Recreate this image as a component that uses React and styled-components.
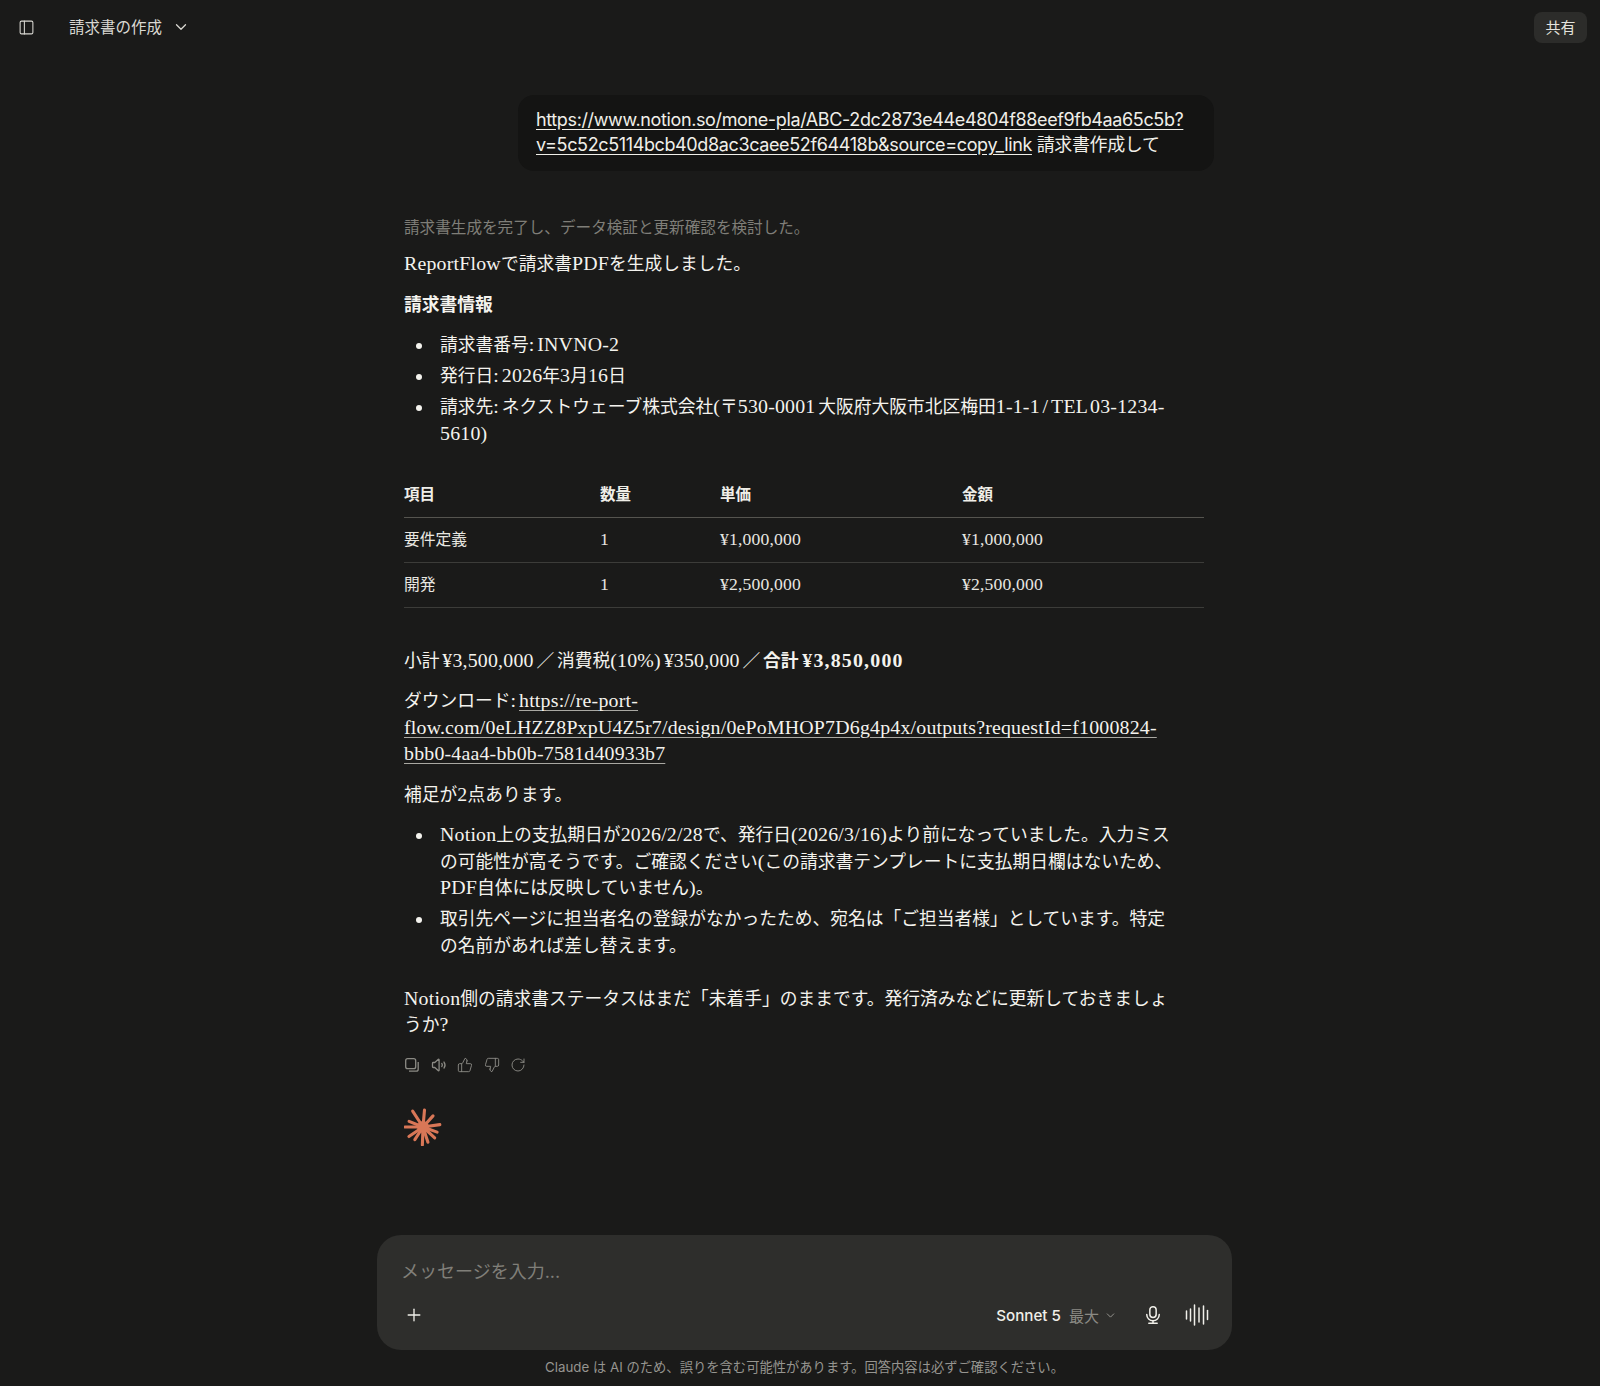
import styled, { createGlobalStyle } from "styled-components";
import { PanelLeft, ChevronDown, ThumbsUp, ThumbsDown, RotateCw, Plus } from "lucide-react";

const CJK = `"Noto Sans CJK JP"`;
const SANS = `Inter, ${CJK}, sans-serif`;
const SERIF = `"Liberation Serif", ${CJK}, serif`;

const GlobalStyle = createGlobalStyle`
  html, body {
    margin: 0;
    padding: 0;
    background: #1a1a19;
  }
  * {
    box-sizing: border-box;
  }
`;

const Page = styled.div`
  height: 1386px;
  display: flex;
  flex-direction: column;
  background: #1a1a19;
  color: #f4f3ee;
  overflow: hidden;
`;

const Header = styled.header`
  height: 54px;
  flex: none;
  display: flex;
  align-items: center;
  padding: 0 13px 0 18px;
  color: #d9d8d2;
`;

const Title = styled.span`
  margin-left: 34px;
  font: 400 15.5px ${SANS};
  position: relative;
  top: -1px;
`;

const TitleChevron = styled(ChevronDown)`
  margin-left: 10px;
`;

const ShareButton = styled.button`
  margin-left: auto;
  width: 53px;
  height: 31px;
  padding: 0 0 2px;
  border: 0;
  border-radius: 8px;
  background: #2c2c2a;
  color: #e4e3dd;
  font: 400 15px ${SANS};
`;

const Thread = styled.main`
  flex: 1;
  width: 828px;
  margin-left: 404px;
`;

const UserRow = styled.div`
  display: flex;
  margin-top: 41px;
`;

const UserBubble = styled.div`
  width: 696px;
  margin-left: 114px;
  padding: 11.5px 18px 13.5px;
  border-radius: 16px;
  background: #141413;
  font: 400 18px/25.5px ${SANS};
  letter-spacing: -0.37px;
  white-space: nowrap;
  color: #f0efe9;
  a {
    color: inherit;
    text-decoration: underline;
    text-underline-offset: 3px;
  }
`;

const Response = styled.article`
  width: 800px;
  margin-top: 45px;
  font: 400 17.75px/26.5px ${SERIF};
  color: #f4f3ee;
`;

const Thinking = styled.p`
  margin: 0 0 11px;
  font: 400 15.6px/24px ${SANS};
  color: #7f7e78;
`;

const Para = styled.p`
  margin: 0 0 14px;
  a {
    color: inherit;
    text-decoration: underline;
    text-decoration-color: #a9a8a2;
    text-decoration-thickness: 1px;
    text-underline-offset: 3px;
  }
`;

// Latin runs of the answer: the reference face is wider and taller than Liberation Serif
const Latin = styled.span`
  font-size: 1.12em;
  line-height: 0;
  letter-spacing: 0.01em;
  word-spacing: -0.12em;
  white-space: pre;
  strong & {
    letter-spacing: 0.06em;
  }
`;

const BulletList = styled.ul`
  margin: 0 0 26.5px;
  padding: 0;
  list-style: none;
`;

const Bullet = styled.li`
  display: grid;
  grid-template-columns: 36px 1fr;
  margin-bottom: 4.5px;
  &::before {
    content: "";
    width: 6px;
    height: 6px;
    margin: 11px 0 0 12px;
    border-radius: 50%;
    background: #f4f3ee;
  }
`;

const InvoiceTable = styled.table`
  width: 800px;
  table-layout: fixed;
  border-collapse: collapse;
  margin: 0 0 40px;
`;

const HeadCell = styled.th`
  width: ${(p) => p.$width}px;
  height: 43.5px;
  padding: 0;
  text-align: left;
  font: 700 15.5px/24px ${SERIF};
  border-bottom: 1.5px solid #55544f;
  color: #efeee8;
`;

const Cell = styled.td`
  height: 45px;
  padding: 1px 0 0;
  font: 400 15.75px/24px ${SERIF};
  border-bottom: 1px solid #3c3c39;
  color: #e8e7e1;
`;

const Actions = styled.div`
  display: flex;
  gap: 10.5px;
  margin: 18px 0 0;
  color: #8b8a84;
`;

const SparkWrap = styled.div`
  margin-top: 35px;
  height: 38px;
`;

const ComposerArea = styled.div`
  flex: none;
  width: 855px;
  margin-left: 377px;
`;

const Composer = styled.div`
  height: 115px;
  padding: 25px 23px 0 24px;
  border-radius: 24px;
  background: #2e2e2c;
  display: flex;
  flex-direction: column;
`;

const Placeholder = styled.div`
  font: 400 18px/24px ${SANS};
  color: #807f79;
`;

const ComposerBar = styled.div`
  display: flex;
  align-items: center;
  margin-top: 19px;
  color: #f0efe9;
`;

const PlusButton = styled(Plus)`
  margin-left: 3px;
`;

const ModelName = styled.span`
  margin-left: auto;
  font: 500 15.2px ${SANS};
  color: #f0efe9;
`;

const ModelLevel = styled.span`
  margin-left: 8px;
  font: 400 15px ${SANS};
  color: #8b8a84;
`;

const ModelChevron = styled(ChevronDown)`
  margin-left: 5px;
  color: #a3a29c;
`;

const MicIcon = styled.svg`
  margin-left: 26px;
`;

const WaveIcon = styled.svg`
  margin-left: 22px;
`;

const Disclaimer = styled.p`
  margin: 0;
  height: 36px;
  padding-top: 9px;
  text-align: center;
  font: 400 13.3px/17px ${SANS};
  color: #969590;
`;

function Mixed({ text }) {
  return text.split("\n").map((line, i) => (
    <span key={i}>
      {i > 0 && <br />}
      {line.split(/([\x20-\x7e¥]+)/).map((part, j) => (j % 2 ? <Latin key={j}>{part}</Latin> : part))}
    </span>
  ));
}

function CopyIcon() {
  return (
    <svg width="16" height="16" viewBox="0 0 16 16" fill="none" stroke="currentColor" strokeWidth="1.3" strokeLinejoin="round">
      <rect x="1.7" y="1.7" width="10" height="10" rx="2" />
      <path d="M14.2 5v7.2a2 2 0 0 1-2 2H5" />
    </svg>
  );
}

function SpeakerIcon() {
  return (
    <svg width="16" height="16" viewBox="0 0 16 16" fill="none" stroke="currentColor" strokeWidth="1.3" strokeLinejoin="round" strokeLinecap="round">
      <path d="M1.5 6.2v3.6c0 .4.3.7.7.7h1.6l3.6 3.2c.3.2.7 0 .7-.4V2.7c0-.4-.4-.6-.7-.4L3.8 5.5H2.2c-.4 0-.7.3-.7.7z" />
      <path d="M10.8 6.5a2.4 2.4 0 0 1 0 3" />
      <path d="M13 5a5.2 5.2 0 0 1 0 6" />
    </svg>
  );
}

// angle clockwise from +x, length
const RAYS = [
  [-8, 17], [20, 15], [43, 16], [72, 16], [92, 18], [123, 15],
  [146, 17], [180, 18], [202, 15], [237, 19], [275, 17], [312, 15],
];

function Spark() {
  return (
    <svg width="38" height="38" viewBox="-19 -19 38 38">
      <g stroke="#d97757" strokeWidth="3.1" strokeLinecap="round">
        {RAYS.map(([angle, length]) => (
          <line key={angle} x1="0" y1="0" x2={length} y2="0" transform={`rotate(${angle})`} />
        ))}
      </g>
      <circle r="6" fill="#d97757" />
    </svg>
  );
}

function Microphone() {
  return (
    <MicIcon width="20" height="20" viewBox="0 0 24 24" fill="none" stroke="currentColor" strokeWidth="1.8" strokeLinecap="round">
      <rect x="8.2" y="2" width="7.6" height="13" rx="3.8" />
      <path d="M4.5 11.5a7.5 7.5 0 0 0 15 0" />
      <path d="M12 19v2.8" />
      <path d="M7 22h10" />
    </MicIcon>
  );
}

function Wave() {
  const bars = [[1.5, 8], [5.5, 12], [9.5, 20], [14, 14], [18.5, 18], [22.5, 9]];
  return (
    <WaveIcon width="24" height="24" viewBox="0 0 24 24" stroke="currentColor" strokeWidth="1.5" strokeLinecap="round">
      {bars.map(([x, h]) => (
        <line key={x} x1={x} x2={x} y1={12 - h / 2} y2={12 + h / 2} />
      ))}
    </WaveIcon>
  );
}

export default function App() {
  return (
    <Page>
      <GlobalStyle />
      <Header>
        <PanelLeft size={17} strokeWidth={1.5} />
        <Title>請求書の作成</Title>
        <TitleChevron size={18} strokeWidth={1.7} />
        <ShareButton>共有</ShareButton>
      </Header>
      <Thread>
        <UserRow>
          <UserBubble>
            <a href="#u">
              https://www.notion.so/mone-pla/ABC-2dc2873e44e4804f88eef9fb4aa65c5b?
              <br />
              v=5c52c5114bcb40d8ac3caee52f64418b&amp;source=copy_link
            </a>{" "}
            請求書作成して
          </UserBubble>
        </UserRow>
        <Response>
          <Thinking>請求書生成を完了し、データ検証と更新確認を検討した。</Thinking>
          <Para>
            <Mixed text="ReportFlowで請求書PDFを生成しました。" />
          </Para>
          <Para>
            <strong>請求書情報</strong>
          </Para>
          <BulletList>
            <Bullet>
              <span>
                <Mixed text="請求書番号: INVNO-2" />
              </span>
            </Bullet>
            <Bullet>
              <span>
                <Mixed text="発行日: 2026年3月16日" />
              </span>
            </Bullet>
            <Bullet>
              <span>
                <Mixed text={"請求先: ネクストウェーブ株式会社(〒530-0001 大阪府大阪市北区梅田1-1-1 / TEL 03-1234-\n5610)"} />
              </span>
            </Bullet>
          </BulletList>
          <InvoiceTable>
            <thead>
              <tr>
                <HeadCell $width={196}>項目</HeadCell>
                <HeadCell $width={120}>数量</HeadCell>
                <HeadCell $width={242}>単価</HeadCell>
                <HeadCell $width={242}>金額</HeadCell>
              </tr>
            </thead>
            <tbody>
              <tr>
                <Cell>要件定義</Cell>
                <Cell><Mixed text="1" /></Cell>
                <Cell><Mixed text="¥1,000,000" /></Cell>
                <Cell><Mixed text="¥1,000,000" /></Cell>
              </tr>
              <tr>
                <Cell>開発</Cell>
                <Cell><Mixed text="1" /></Cell>
                <Cell><Mixed text="¥2,500,000" /></Cell>
                <Cell><Mixed text="¥2,500,000" /></Cell>
              </tr>
            </tbody>
          </InvoiceTable>
          <Para>
            <Mixed text="小計 ¥3,500,000 ／ 消費税(10%) ¥350,000 ／ " />
            <strong>
              <Mixed text="合計 ¥3,850,000" />
            </strong>
          </Para>
          <Para>
            <Mixed text="ダウンロード: " />
            <a href="#d">
              <Mixed text={"https://re-port-\nflow.com/0eLHZZ8PxpU4Z5r7/design/0ePoMHOP7D6g4p4x/outputs?requestId=f1000824-\nbbb0-4aa4-bb0b-7581d40933b7"} />
            </a>
          </Para>
          <Para>
            <Mixed text="補足が2点あります。" />
          </Para>
          <BulletList>
            <Bullet>
              <span>
                <Mixed text={"Notion上の支払期日が2026/2/28で、発行日(2026/3/16)より前になっていました。入力ミス\nの可能性が高そうです。ご確認ください(この請求書テンプレートに支払期日欄はないため、\nPDF自体には反映していません)。"} />
              </span>
            </Bullet>
            <Bullet>
              <span>
                <Mixed text={"取引先ページに担当者名の登録がなかったため、宛名は「ご担当者様」としています。特定\nの名前があれば差し替えます。"} />
              </span>
            </Bullet>
          </BulletList>
          <Para>
            <Mixed text={"Notion側の請求書ステータスはまだ「未着手」のままです。発行済みなどに更新しておきましょ\nうか?"} />
          </Para>
        </Response>
        <Actions>
          <CopyIcon />
          <SpeakerIcon />
          <ThumbsUp size={16} strokeWidth={1.4} />
          <ThumbsDown size={16} strokeWidth={1.4} />
          <RotateCw size={16} strokeWidth={1.4} />
        </Actions>
        <SparkWrap>
          <Spark />
        </SparkWrap>
      </Thread>
      <ComposerArea>
        <Composer>
          <Placeholder>メッセージを入力...</Placeholder>
          <ComposerBar>
            <PlusButton size={20} strokeWidth={1.6} />
            <ModelName>Sonnet 5</ModelName>
            <ModelLevel>最大</ModelLevel>
            <ModelChevron size={13} strokeWidth={1.6} />
            <Microphone />
            <Wave />
          </ComposerBar>
        </Composer>
        <Disclaimer>Claude は AI のため、誤りを含む可能性があります。回答内容は必ずご確認ください。</Disclaimer>
      </ComposerArea>
    </Page>
  );
}
